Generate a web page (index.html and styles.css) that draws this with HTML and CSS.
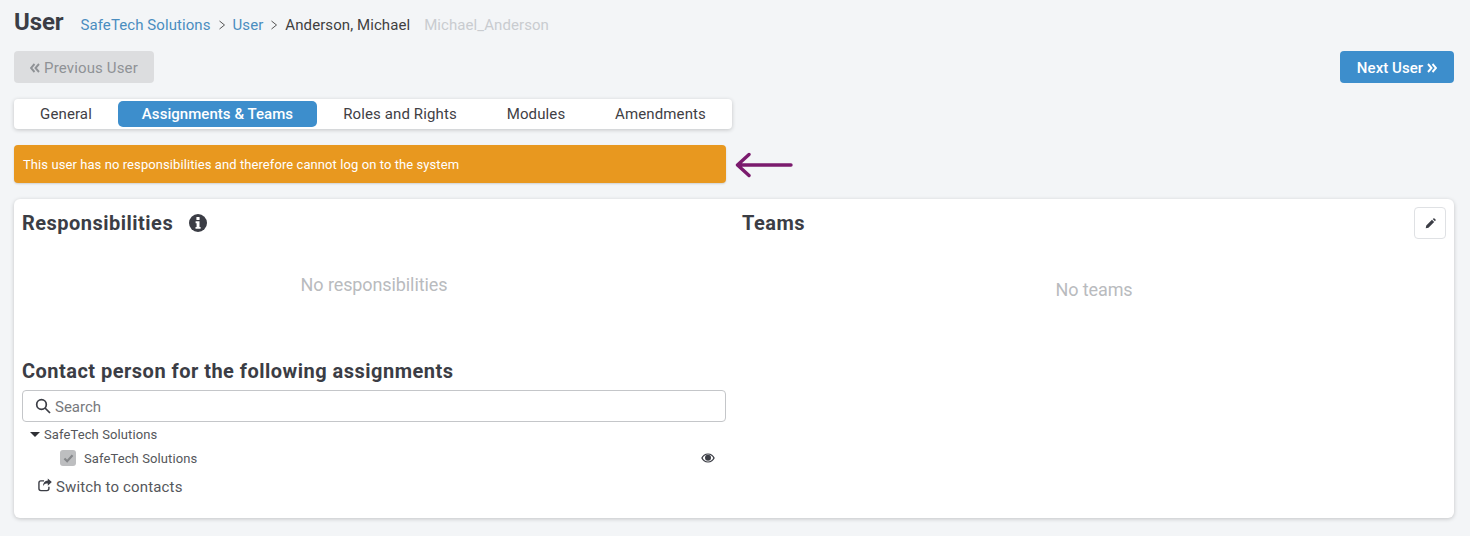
FILE: index.html
```html
<!DOCTYPE html>
<html lang="en">

<head>
    <meta charset="UTF-8">
    <title>User</title>
    <link rel="stylesheet" href="styles.css">
</head>

<body>
    <div class="page-head">
        <h1 class="page-title">User</h1>
        <nav class="crumbs">
            <a class="crumb-link">SafeTech Solutions</a>
            <svg class="crumb-sep" viewBox="0 0 8 10"><path d="M1.5 1l5 4-5 4" /></svg>
            <a class="crumb-link">User</a>
            <svg class="crumb-sep" viewBox="0 0 8 10"><path d="M1.5 1l5 4-5 4" /></svg>
            <span class="crumb-current">Anderson, Michael</span>
            <span class="crumb-login">Michael_Anderson</span>
        </nav>
    </div>

    <div class="pager">
        <button class="btn btn-disabled">
            <svg class="chevrons" viewBox="0 0 10 10"><path d="M4.500 1L1 5l3.500 4M9 1L5.500 5 9 9" /></svg>
            Previous User
        </button>
        <button class="btn btn-primary">
            Next User
            <svg class="chevrons" viewBox="0 0 10 10"><path d="M1 1l3.500 4L1 9M5.500 1L9 5 5.500 9" /></svg>
        </button>
    </div>

    <div class="tabs">
        <a class="tab tab-general">General</a>
        <a class="tab tab-assign selected">Assignments &amp; Teams</a>
        <a class="tab tab-roles">Roles and Rights</a>
        <a class="tab tab-modules">Modules</a>
        <a class="tab tab-amend">Amendments</a>
    </div>

    <div class="notice-row">
        <div class="notice">This user has no responsibilities and therefore cannot log on to the system</div>
        <svg class="notice-arrow" viewBox="0 0 58 26">
            <path d="M56 13H3M14 2.500L2.500 13 14 23.500" />
        </svg>
    </div>

    <div class="panel">
        <div class="col">
            <div class="col-head">
                <h2>Responsibilities</h2>
                <svg class="info-icon" viewBox="0 0 18 18">
                    <circle cx="9" cy="9" r="9" />
                    <rect x="7.400" y="3" width="3.200" height="3" rx=".6" fill="#fff" />
                    <path d="M6.600 7.300h3.900v5.600h1.100v1.900H6.500v-1.900h1.100V9.200h-1z" fill="#fff" />
                </svg>
            </div>
            <p class="empty empty-resp">No responsibilities</p>

            <h2 class="contact-title">Contact person for the following assignments</h2>
            <div class="search">
                <svg class="search-icon" viewBox="0 0 16 16">
                    <circle cx="6.500" cy="6.500" r="4.800" />
                    <path d="M10 10l5 5" />
                </svg>
                <span>Search</span>
            </div>
            <div class="tree-root">
                <span class="caret"></span>
                <span>SafeTech Solutions</span>
            </div>
            <div class="tree-leaf">
                <span class="check">
                    <svg viewBox="0 0 12 10"><path d="M1.500 5l3 3 6-6.500" /></svg>
                </span>
                <span class="leaf-name">SafeTech Solutions</span>
                <svg class="eye" viewBox="0 0 14 10">
                    <path d="M7 .5C3.800.5 1.400 2.500.2 5c1.200 2.500 3.600 4.500 6.800 4.500S12.600 7.500 13.800 5C12.600 2.500 10.200.5 7 .5zm0 8C4.700 8.500 2.800 7 1.700 5 2.800 3 4.700 1.500 7 1.500S11.200 3 12.300 5C11.200 7 9.300 8.500 7 8.500z" />
                    <circle cx="7" cy="4.800" r="3" />
                </svg>
            </div>
            <a class="switch-link">
                <svg class="share-icon" viewBox="0 0 15 14">
                    <path d="M10.500 0l4.300 3.800-4.300 3.900V5.400C8 5.400 6.300 6 5.300 8.400c0-3.800 2-5.900 5.200-6.200z" />
                    <path class="share-box" d="M6.500 2.600H3.200A2.200 2.200 0 0 0 1 4.800v6a2.200 2.200 0 0 0 2.200 2.200h6.300a2.200 2.200 0 0 0 2.200-2.200V9" />
                </svg>
                Switch to contacts
            </a>
        </div>

        <div class="col">
            <div class="col-head col-head-teams">
                <h2>Teams</h2>
                <button class="edit-btn">
                    <svg viewBox="0 0 12 12"><path d="M.8 11.200l.6-3 6.200-6.200 2.400 2.400-6.200 6.200zM8.400 1.200l.8-.7a.8.8 0 0 1 1.100 0l1.200 1.200a.8.8 0 0 1 0 1.100l-.7.800z" /></svg>
                </button>
            </div>
            <p class="empty empty-teams">No teams</p>
        </div>
    </div>
</body>

</html>
```

FILE: styles.css
```css
* {
    padding: 0;
    margin: 0;
    box-sizing: border-box;
}

body {
    height: 536px;
    padding: 0 16px 0 14px;
    overflow: hidden;
    background-color: #f3f5f7;
    color: #3b3d45;
    font-family: Roboto, "Liberation Sans", sans-serif;
}

/* header */
.page-head {
    height: 51px;
    padding-top: 7px;
    display: flex;
    align-items: flex-start;
}

.page-title {
    font-size: 24px;
    line-height: 30px;
    font-weight: 700;
    letter-spacing: -.1px;
}

.crumbs {
    margin-left: 17px;
    height: 36px;
    display: flex;
    align-items: center;
    font-size: 15px;
    letter-spacing: .08px;
}

.crumb-link {
    color: #4a8dbf;
}

.crumb-sep {
    width: 8px;
    height: 10px;
    margin: 0 7px;
    fill: none;
    stroke: #555;
    stroke-width: 1;
}

.crumb-current {
    color: #3f3f3f;
}

.crumb-login {
    margin-left: 14px;
    color: #c9ccd0;
}

/* previous / next */
.pager {
    display: flex;
    justify-content: space-between;
    height: 32px;
}

.btn {
    height: 32px;
    padding-top: 1px;
    display: flex;
    align-items: center;
    justify-content: center;
    gap: 4px;
    border: 0;
    border-radius: 4px;
    font-family: inherit;
    font-size: 15px;
    letter-spacing: .15px;
}

.chevrons {
    width: 10px;
    height: 10px;
    fill: none;
    stroke: currentColor;
    stroke-width: 1.900;
}

.btn-disabled {
    width: 140px;
    background-color: #dcdddf;
    color: #8f9296;
}

.btn-primary {
    width: 114px;
    background-color: #3d8ecc;
    color: #fff;
    font-weight: 500;
    letter-spacing: .05px;
}

/* tabs */
.tabs {
    width: 718px;
    height: 30px;
    margin-top: 16px;
    padding: 2px 0;
    display: flex;
    background-color: #fff;
    border-radius: 4px;
    box-shadow: 0 1px 4px rgba(0, 0, 0, .2);
    font-size: 15px;
    letter-spacing: .12px;
}

.tab {
    height: 26px;
    line-height: 26px;
    text-align: center;
    color: #3f4045;
    border-radius: 5px;
}

.tab-general { width: 104px; }
.tab-assign { width: 199px; }
.tab-roles { width: 166px; }
.tab-modules { width: 106px; }
.tab-amend { width: 143px; }

.tab.selected {
    background-color: #3d8ecc;
    color: #fff;
    font-weight: 500;
    letter-spacing: .05px;
}

/* warning */
.notice-row {
    margin-top: 16px;
    display: flex;
    align-items: center;
}

.notice {
    width: 712px;
    height: 38px;
    padding-left: 9px;
    line-height: 39px;
    background-color: #e8981f;
    border-radius: 4px;
    box-shadow: 0 1px 2px rgba(0, 0, 0, .15);
    color: #fff;
    font-size: 13px;
    letter-spacing: .08px;
}

.notice-arrow {
    width: 58px;
    height: 26px;
    margin-left: 9px;
    margin-top: 2px;
    fill: none;
    stroke: #7b1b6e;
    stroke-width: 3.400;
    stroke-linecap: round;
    stroke-linejoin: round;
}

/* panel */
.panel {
    height: 319px;
    margin-top: 16px;
    padding: 8px;
    display: flex;
    gap: 16px;
    background-color: #fff;
    border-radius: 6px;
    box-shadow: 0 1px 4px rgba(0, 0, 0, .2);
}

.col {
    flex: 1;
    min-width: 0;
}

.col-head {
    height: 32px;
    display: flex;
    align-items: center;
}

.col-head-teams {
    justify-content: space-between;
}

h2 {
    font-size: 20px;
    font-weight: 700;
    letter-spacing: .48px;
    color: #3b3d45;
}

.info-icon {
    width: 18px;
    height: 18px;
    margin-left: 16px;
    fill: #3b3d45;
}

.edit-btn {
    width: 32px;
    height: 32px;
    display: flex;
    align-items: center;
    justify-content: center;
    background-color: #fff;
    border: 1px solid #dfe1e4;
    border-radius: 4px;
}

.edit-btn svg {
    width: 11px;
    height: 11px;
    fill: #3b3d45;
}

.empty {
    text-align: center;
    color: #b9bbbe;
    font-size: 18px;
    line-height: 24px;
    letter-spacing: -.1px;
}

.empty-resp {
    margin-top: 34px;
}

.empty-teams {
    margin-top: 39px;
}

.contact-title {
    margin-top: 58px;
    line-height: 32px;
}

.search {
    height: 32px;
    margin-top: 3px;
    padding: 1px 0 0 12px;
    display: flex;
    align-items: center;
    gap: 4px;
    border: 1px solid #c4c6c9;
    border-radius: 4px;
    color: #77797d;
    font-size: 15px;
}

.search-icon {
    width: 16px;
    height: 16px;
    margin-top: -1px;
    fill: none;
    stroke: #3b3d45;
    stroke-width: 1.700;
}

.tree-root {
    height: 24px;
    padding-left: 8px;
    display: flex;
    align-items: center;
    gap: 4px;
    font-size: 13px;
    letter-spacing: .1px;
    color: #55575b;
}

.caret {
    width: 0;
    height: 0;
    border-left: 5px solid transparent;
    border-right: 5px solid transparent;
    border-top: 5px solid #2f3035;
}

.tree-leaf {
    height: 24px;
    padding: 0 11px 0 38px;
    display: flex;
    align-items: center;
    font-size: 13px;
    letter-spacing: .1px;
    color: #55575b;
}

.check {
    width: 16px;
    height: 16px;
    display: flex;
    align-items: center;
    justify-content: center;
    background-color: #bdbec0;
    border-radius: 3px;
}

.check svg {
    width: 11px;
    height: 9px;
    fill: none;
    stroke: #85878a;
    stroke-width: 2.400;
}

.leaf-name {
    flex: 1;
    margin-left: 8px;
}

.eye {
    width: 14px;
    height: 10px;
    fill: #3b3d45;
}

.switch-link {
    margin-top: 6px;
    padding-left: 16px;
    display: flex;
    align-items: center;
    gap: 5px;
    height: 22px;
    font-size: 15px;
    letter-spacing: .15px;
    color: #55575b;
}

.share-icon {
    width: 14px;
    height: 14px;
    margin-top: -4px;
    margin-right: -1px;
    fill: #3b3d45;
}

.share-box {
    fill: none;
    stroke: #3b3d45;
    stroke-width: 1.500;
}
```
